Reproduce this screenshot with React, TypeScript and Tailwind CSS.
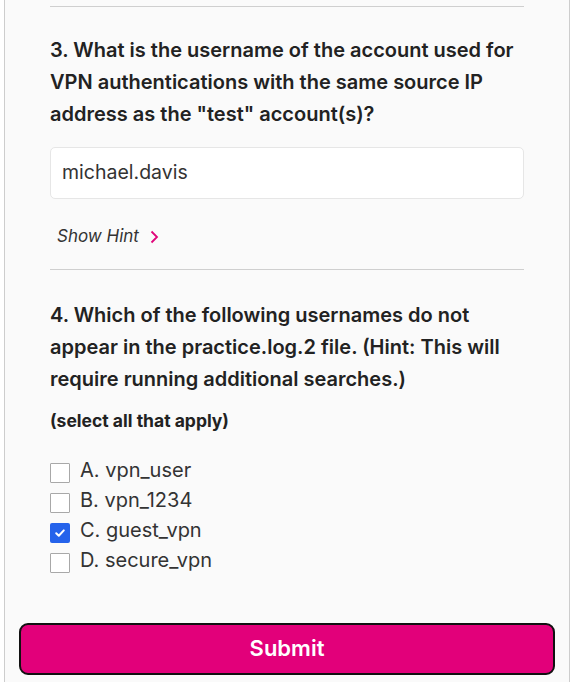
import { useState } from "react";

const OPTIONS = [
  { id: "a", label: "A. vpn_user" },
  { id: "b", label: "B. vpn_1234" },
  { id: "c", label: "C. guest_vpn" },
  { id: "d", label: "D. secure_vpn" },
];

function Check({ checked }: { checked: boolean }) {
  if (checked) {
    return (
      <span className="w-5 h-5 flex items-center justify-center bg-[#2563eb] rounded-[2px] shrink-0">
        <svg width="12" height="12" viewBox="0 0 12 12" fill="none">
          <path d="M2.2 6.3 L4.8 8.8 L9.8 3.4" stroke="white" strokeWidth="2" strokeLinecap="round" strokeLinejoin="round" />
        </svg>
      </span>
    );
  }
  return <span className="w-5 h-5 border border-[#a8a8a8] bg-white rounded-[1px] shrink-0" />;
}

export default function App() {
  const [picked, setPicked] = useState<string[]>(["c"]);

  const toggle = (id: string) =>
    setPicked((p) => (p.includes(id) ? p.filter((x) => x !== id) : [...p, id]));

  return (
    <div className="h-[682px] overflow-hidden bg-white pl-1 font-['Inter',sans-serif] text-[#222]">
      <div className="h-full bg-[#fafafa] border-x border-[#cdcdcd]">
        <div className="px-[45px] pt-[6px]">
          <div className="h-px bg-[#cfcfcf]" />

          {/* ── Question 3 ── */}
          <h2 className="mt-[27px] text-[20px] font-semibold leading-[32px]">
            3. What is the username of the account used for VPN authentications with the same source IP
            address as the "test" account(s)?
          </h2>
          <div className="mt-[17px] h-[52px] bg-white border border-[#e6e6e6] rounded-[5px] flex items-center px-[11px] text-[19.5px] text-[#333]">
            michael.davis
          </div>
          <button type="button" className="mt-[26px] ml-[7px] flex items-center gap-[11px] h-6 text-[17px] italic text-[#333]">
            Show Hint
            <svg width="9" height="14" viewBox="0 0 9 14" fill="none">
              <path d="M1.5 1.5 L7 7 L1.5 12.5" stroke="#e0047a" strokeWidth="1.8" />
            </svg>
          </button>
          <div className="mt-[20px] h-px bg-[#cfcfcf]" />

          {/* ── Question 4 ── */}
          <h2 className="mt-[29px] text-[20px] font-semibold leading-[32px]">
            4. Which of the following usernames do not appear in the practice.log.2 file. (Hint: This will
            require running additional searches.)
          </h2>
          <p className="mt-[14px] text-[17.5px] font-bold leading-6">(select all that apply)</p>
          <ul className="mt-[25px]">
            {OPTIONS.map(({ id, label }) => (
              <li key={id} className="h-[30px] flex items-center gap-[10px] cursor-pointer" onClick={() => toggle(id)}>
                <Check checked={picked.includes(id)} />
                <span className="text-[20px] text-[#333] leading-none -mt-[6px]">{label}</span>
              </li>
            ))}
          </ul>
        </div>

        <div className="px-[14px] mt-[45px]">
          <button
            type="button"
            className="w-full h-[52px] bg-[#e2007a] border-2 border-[#111] rounded-[9px] text-white text-[22px] font-semibold leading-none pb-[3px]"
          >
            Submit
          </button>
        </div>
      </div>
    </div>
  );
}
